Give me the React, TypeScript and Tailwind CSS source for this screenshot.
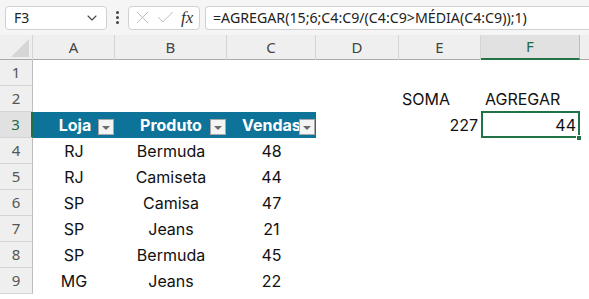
import { Fragment } from "react";
import { ChevronDown, X, Check } from "lucide-react";

const cols = ["A", "B", "C", "D", "E", "F"];

const data = [
  ["RJ", "Bermuda", "48"],
  ["RJ", "Camiseta", "44"],
  ["SP", "Camisa", "47"],
  ["SP", "Jeans", "21"],
  ["SP", "Bermuda", "45"],
  ["MG", "Jeans", "22"],
];

const grid = "grid grid-cols-[33px_82px_112px_89px_83px_82px_99px_1fr]";
const cellFont = { fontFamily: "Inter, 'Noto Sans', sans-serif" };

function FilterButton() {
  return (
    <div className="absolute right-[1px] top-[7px] w-[16px] h-[16px] bg-[#f4f4f4] border border-[#a8a8a8] flex items-end justify-center pb-[4px]">
      <div className="w-0 h-0 border-l-[4px] border-r-[4px] border-t-[4px] border-l-transparent border-r-transparent border-t-[#6b6b6b]" />
    </div>
  );
}

function RowHeader({ n, active }: { n: number; active?: boolean }) {
  return (
    <div
      className={`h-[26px] flex items-center justify-center text-[15px] border-b border-[#d4d4d4] ${
        active
          ? "bg-[#e1e1e1] text-[#1e6b41] border-r-2 border-r-[#217346]"
          : "bg-[#efefef] text-[#555] border-r border-r-[#bdbdbd]"
      }`}
      style={{ fontFamily: "'Noto Sans', sans-serif" }}
    >
      {n}
    </div>
  );
}

export default function App() {
  return (
    <div className="w-[589px] h-[299px] overflow-hidden bg-white">
      {/* formula bar */}
      <div className="h-[35px] bg-[#f5f5f5] flex items-center pl-[5px]" style={{ fontFamily: "'Noto Sans', sans-serif" }}>
        <div className="w-[102px] h-[24px] bg-white border border-[#d0d0d0] rounded-[4px] flex items-center justify-between pl-[8px] pr-[6px] text-[14px] text-[#222]">
          <span>F3</span>
          <ChevronDown size={16} strokeWidth={1.6} className="text-[#444]" />
        </div>
        <div className="w-[21px] flex flex-col items-center gap-[2px]">
          <div className="w-[3px] h-[3px] bg-[#444] rounded-full" />
          <div className="w-[3px] h-[3px] bg-[#444] rounded-full" />
          <div className="w-[3px] h-[3px] bg-[#444] rounded-full" />
        </div>
        <div className="w-[72px] h-[24px] bg-white border border-[#d0d0d0] rounded-[4px] flex items-center gap-[2px] pl-[3px]">
          <X size={21} strokeWidth={1} className="text-[#b4b4b4]" />
          <Check size={21} strokeWidth={1} className="text-[#b4b4b4]" />
          <span className="ml-[3px] text-[17px] italic text-[#333]" style={{ fontFamily: "'Liberation Serif', serif" }}>
            fx
          </span>
        </div>
        <div className="ml-[5px] flex-1 h-[24px] bg-white border border-[#d0d0d0] border-r-0 rounded-l-[4px] flex items-center pl-[7px] text-[14.2px] text-[#222] whitespace-nowrap">
          =AGREGAR(15;6;C4:C9/(C4:C9&gt;MÉDIA(C4:C9));1)
        </div>
      </div>

      {/* column headers */}
      <div className={`${grid} h-[25px] bg-[#efefef] border-b border-[#a9a9a9]`} style={{ fontFamily: "'Noto Sans', sans-serif" }}>
        <div className="border-r border-[#d4d4d4] flex items-end justify-end pr-[3px] pb-[3px]">
          <svg width="18" height="18" viewBox="0 0 18 18">
            <polygon points="18,0 18,18 0,18" fill="#d6d6d6" />
          </svg>
        </div>
        {cols.map((c) => (
          <div
            key={c}
            className={`flex items-center justify-center text-[15px] border-r border-[#d4d4d4] ${
              c === "F" ? "bg-[#e1e1e1] text-[#1e6b41] border-b-2 border-b-[#217346] border-r-[#bdbdbd]" : "text-[#444]"
            }`}
          >
            {c}
          </div>
        ))}
        <div />
      </div>

      {/* rows */}
      <div className={grid} style={cellFont}>
        {/* row 1 */}
        <RowHeader n={1} />
        <div className="col-span-7 h-[26px]" />
        {/* row 2 */}
        <RowHeader n={2} />
        <div />
        <div />
        <div />
        <div />
        <div className="h-[26px] flex items-center pl-[3px] text-[16px] text-[#111]">SOMA</div>
        <div className="h-[26px] flex items-center pl-[4px] text-[16px] text-[#111]">AGREGAR</div>
        <div />
        {/* row 3 */}
        <RowHeader n={3} active />
        {["Loja", "Produto", "Vendas"].map((h, i) => (
          <div
            key={h}
            className={`relative h-[26px] bg-[#0e7399] flex items-center text-white font-bold text-[16px] overflow-hidden ${
              i === 2 ? "pl-[15px]" : i === 0 ? "justify-center pl-[2px]" : "justify-center"
            }`}
          >
            <span>{h}</span>
            <FilterButton />
          </div>
        ))}
        <div />
        <div className="h-[26px] flex items-center justify-end pr-[3px] text-[16px] text-[#111]">227</div>
        <div className="relative h-[26px] flex items-center justify-end pr-[4px] text-[16px] text-[#111]">
          44
          <div className="absolute left-0 -top-px w-[99px] h-[27px] border-2 border-[#217346]" />
          <div className="absolute -right-[2px] -bottom-[3px] w-[6px] h-[6px] bg-[#217346] border border-white" />
        </div>
        <div />
        {/* data rows */}
        {data.map((r, i) => (
          <Fragment key={i}>
            <RowHeader n={i + 4} />
            {r.map((v, j) => (
              <div key={j} className="h-[26px] flex items-center justify-center text-[16px] text-[#111]">
                {v}
              </div>
            ))}
            <div className="col-span-4" />
          </Fragment>
        ))}
      </div>
    </div>
  );
}
